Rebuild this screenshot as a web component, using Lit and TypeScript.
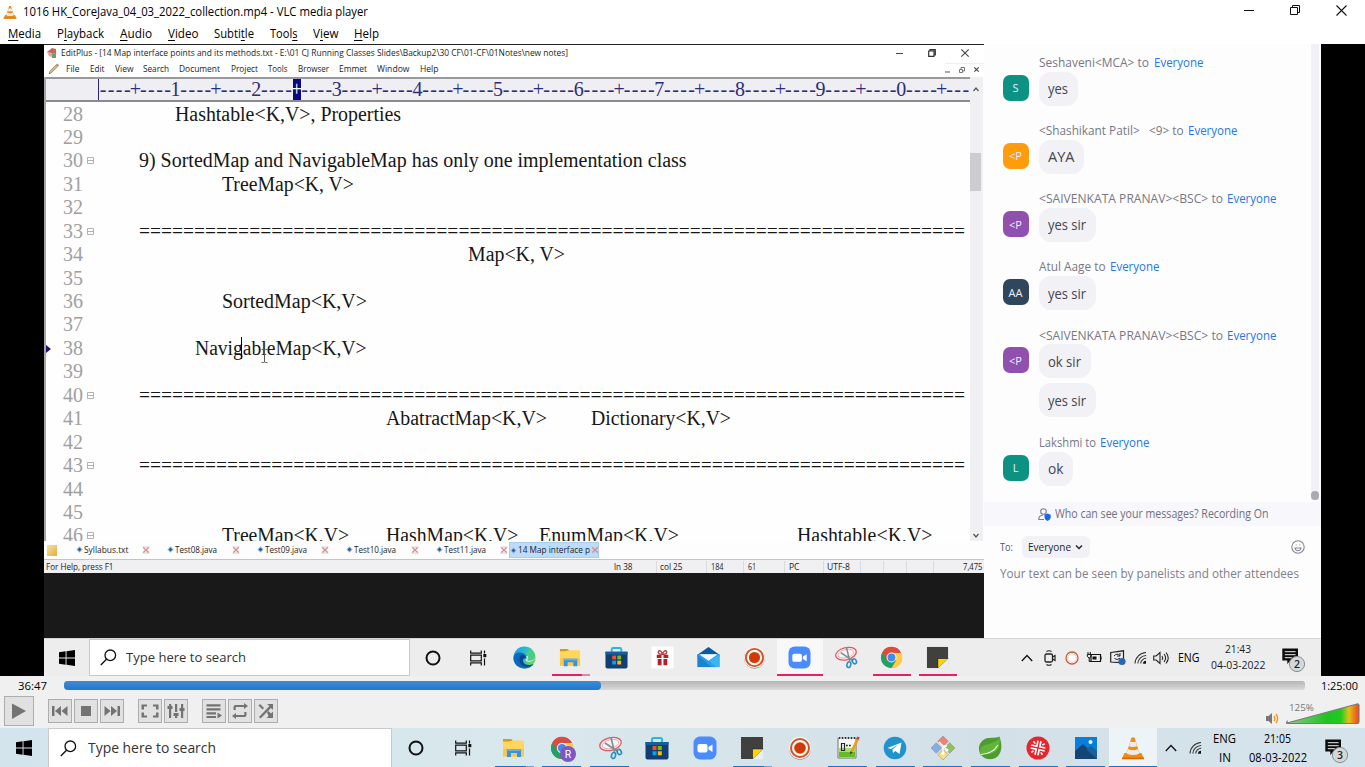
import { LitElement, html, css, svg, nothing } from "lit";
import type { TemplateResult } from "lit";

/** Text that is condensed or expanded to occupy a given width. */
class FitText extends LitElement {
  static properties = { w: { type: Number } };
  static styles = css`
    :host { display: inline-block; flex: none; white-space: pre; }
    .box { display: block; }
    .ink { display: inline-block; transform-origin: 0 50%; white-space: pre; }
  `;
  declare w: number;
  updated() {
    const ink = this.renderRoot.querySelector(".ink") as HTMLElement;
    ink.style.transform = "none";
    const natural = ink.getBoundingClientRect().width;
    if (natural > 0 && this.w) ink.style.transform = `scaleX(${this.w / natural})`;
  }
  render() {
    return html`<span class="box" style="width:${this.w}px"><span class="ink"><slot></slot></span></span>`;
  }
}
customElements.define("fit-text", FitText);

type Piece = [number, number, unknown];

/** A run of texts in one flex row, each with its start and end; null draws a divider. */
const run = (origin: number, pieces: Piece[]) => {
  let at = origin;
  return pieces.map(([a, b, text]) => {
    const gap = a - at;
    at = b;
    if (text === null) return html`<i class="divider" style="margin-left:${gap.toFixed(2)}px"></i>`;
    return html`<fit-text .w=${b - a} style="margin-left:${gap.toFixed(2)}px">${text}</fit-text>`;
  });
};

const icon = (w: number, h: number, body: unknown, vb = `0 0 ${w} ${h}`) =>
  html`<svg width=${w} height=${h} viewBox=${vb} fill="none">${body}</svg>`;

/* ---------- application icons, 24 x 24 ---------- */
const folder = svg`<path d="M1 3h8l2 2h-3L7 7H1z" fill="#d99a0b"/><path d="M1 5.5h8l2-1h11v16H1z" fill="#ffd65c"/><path d="M1 13h21v7.500H1z" fill="#fbc94a"/><path d="M5 21v-7.500h14V21h-4v-4H9v4z" fill="#3b92dc"/><path d="M4.500 13h15v2h-15z" fill="#62b0ec"/>`;
const edge = svg`<defs><linearGradient id="eg" x1="0" y1="0" x2="1" y2=".4"><stop offset="0" stop-color="#1b9de2"/><stop offset=".55" stop-color="#2bbccb"/><stop offset="1" stop-color="#6bd84f"/></linearGradient></defs><circle cx="12" cy="12" r="11.500" fill="url(#eg)"/><path d="M.6 13C.6 8 5 6.500 8.500 7c4 .4 6 3.500 5.500 6-4-.8-5.500 3-3 5.500s7 2.500 10.500.3C18 23.500 12 24.500 7.500 22.500 3 20.500.6 17 .6 13z" fill="#0c68bd"/><path d="M8.200 9.800C5.500 13 6.500 19 11.500 21c4 1.500 8 .3 10-2.200-4 1.800-9.500 1.200-10.900-2.300-.9-2.500.9-4.300 2.700-4-.2-2.200-2.900-3.700-5.100-2.700z" fill="#0b4593"/><path d="M13.800 10.500c1.200 1.600.2 3.200-.5 3.900-.6 1.200 1.700 2.600 4.700 2 2.600-.5 5-2.300 5.300-4.900" fill="#eafafd" opacity=".85"/><path d="M13.400 8.500c2.800 1.200 3.200 4.200 1.200 6 2 1.800 7.300.8 8.500-2.500 0-7-6-9-9.700-3.500z" fill="#4dcb85"/>`;
const store = svg`<path d="M7 6V3.500Q7 2 8.500 2h7Q17 2 17 3.500V6" stroke="#25b5ef" stroke-width="2"/><path d="M.5 6h23v15.500q0 2-2 2h-19q-2 0-2-2z" fill="#123f73"/><path d="M.5 6h23v3H.5z" fill="#175f9c"/><path d="M7.500 10h4v4h-4z" fill="#f25022"/><path d="M12.800 10h4v4h-4z" fill="#7fba00"/><path d="M7.500 15.300h4v4h-4z" fill="#00a4ef"/><path d="M12.800 15.300h4v4h-4z" fill="#ffb900"/>`;
const gift = svg`<path d="M.5.5h23v23H.5z" fill="#fff"/><path d="M6 9h5v3.500H6zM13 9h5v3.500h-5zM7 13.500h4V20H7zM13 13.500h4V20h-4z" fill="#b3202a"/><path d="M12 8.500C8 9 7 7 8 5.500S11.500 6 12 8.500c.5-2.500 3-4.500 4-3s0 3.500-4 3z" stroke="#c23b42" stroke-width="1.500"/>`;
const mail = svg`<path d="M.5 9 12 1l11.500 8v2H.5z" fill="#0c59a4"/><path d="M.5 8.500h23V22H.5z" fill="#2a9fe6"/><path d="M3 9h18l-9 6z" fill="#fff"/><path d="M.5 9 15 22H.5z" fill="#1a83d3"/><path d="M23.500 9 12 15l8 7h3.500z" fill="#37b6f1"/><path d="M3 8.500h18L12 15z" fill="#f3f8fc"/>`;
const recorder = svg`<circle cx="12" cy="12.700" r="11" fill="#9a9390"/><circle cx="12" cy="12" r="11" fill="#fbf7f4"/><circle cx="12" cy="12" r="9" stroke="#cf5323" stroke-width="2"/><circle cx="12" cy="12" r="5.800" fill="#d03a09"/>`;
const zoomApp = svg`<rect x=".5" y=".5" width="23" height="23" rx="6.500" fill="#4a8cff"/><rect x="4.500" y="8" width="10" height="8.500" rx="2" fill="#fff"/><path d="M15.500 11l4-2.500v7.500l-4-2.500z" fill="#fff"/>`;
const snip = svg`<ellipse cx="12.500" cy="8" rx="11" ry="6.300" transform="rotate(-14 12.500 8)" fill="#f4f4f6" stroke="#dd5a60" stroke-width="1.300"/><ellipse cx="12.500" cy="8" rx="8.500" ry="4.300" transform="rotate(-14 12.500 8)" stroke="#e5a3a6" stroke-width=".8"/><path d="M13 1.500 16.500 16M7 7l13 8.500" stroke="#868a8e" stroke-width="1.600"/><ellipse cx="15.500" cy="19.500" rx="2" ry="3" transform="rotate(15 15.500 19.500)" stroke="#2b8ec1" stroke-width="1.600"/><ellipse cx="21.300" cy="16" rx="2" ry="2.700" transform="rotate(-30 21.300 16)" stroke="#2b8ec1" stroke-width="1.600"/>`;
const chrome = svg`<circle cx="12" cy="12" r="11" fill="#dd4b3e"/><path d="M2.500 6.500A11 11 0 0 0 12 23l5-8-5-3-5 2.500z" fill="#1ea362"/><path d="M12 23A11 11 0 0 0 22 7H12l4.800 8z" fill="#ffcd42"/><path d="M2.500 6.500 7.500 14.500 12 7h10A11 11 0 0 0 2.500 6.500z" fill="#dd4b3e"/><circle cx="12" cy="12" r="5.200" fill="#f4f4f4"/><circle cx="12" cy="12" r="4.100" fill="#4688f1"/>`;
const chromeR = svg`${chrome}<circle cx="18" cy="18" r="8" fill="#7e57c2"/><text x="18" y="22" font-size="10.500" fill="#fff" text-anchor="middle" font-family="Roboto, sans-serif">R</text>`;
const sticky = svg`<path d="M1 1h22v22H1z" fill="#40403f"/><path d="M12.500 13H23L12.500 23z" fill="#ffd400"/><path d="M23.200 13v10.200H12.500z" fill="#e9eef0"/><path d="M12 12.500h11.200v.8H12.700V23H12z" fill="#2c2c2c"/>`;
const editplus = svg`<path d="M2 2h18v20H2z" fill="#f5f7f2" stroke="#76756e"/><path d="M3 15h16v6H3z" fill="#64bd27"/><path d="M3 12h16v4H3z" fill="#a9df6c"/><path d="M3.500 1v2M6.500 1v2M9.500 1v2M12.500 1v2M15.500 1v2M18.500 1v2" stroke="#333"/><path d="M5.500 7.500h3v7h-3z" stroke="#262626" stroke-width="1.200"/><path d="M10 9.500h1.800M13 9.500h1.800" stroke="#262626" stroke-width="1.700"/><path d="M21.500 3.500 15.500 16" stroke="#e6a11c" stroke-width="2.800"/><path d="m22.500 1-1.200 2.500" stroke="#c1423a" stroke-width="2.800"/><path d="m14.300 15.300-.3 3.200 2.700-2z" fill="#43382a"/>`;
const telegram = svg`<circle cx="12" cy="12" r="11.300" fill="#1e93cf"/><path d="M4.500 12 18.500 6.500 16.500 18l-4.200-3-2.300 2-.6-3.500 6-5-7.500 4.500z" fill="#fff"/>`;
const gitApp = svg`<g transform="rotate(45 12 12)" stroke="#8c8e8c" stroke-width=".5"><path d="M3.500 3.500H11V11H3.500z" fill="#f0807a"/><path d="M13 3.500h7.500V11H13z" fill="#8fc15b"/><path d="M3.500 13H11v7.500H3.500z" fill="#82aee4"/><path d="M13 13h7.500v7.500H13z" fill="#f5df79"/></g><path d="M8 6l8 8M12 10v8M12 10h4" stroke="#fff" stroke-width="1.400"/><circle cx="16" cy="14" r="1.600" fill="#fff"/><circle cx="12" cy="17.500" r="1.600" fill="#fff"/>`;
const spring = svg`<path d="M21.500.5C24 8 24.500 15 20 20 15 25 7 24 3 19-.5 14 .5 7 6 3.500c5-3 11-.5 15.500-3z" fill="#4e9b2f"/><path d="M21.500 1.500C19 7 11 7 5 10c-3.500 2-3 6-2.500 7.500C8 19.500 19 18 21 10.500c.7-3 1-6 .5-9z" fill="#61b53a"/><path d="M3 18.500C10 17.500 16 16 20 9" stroke="#eaf5e4" stroke-width="1.200"/>`;
const redHash = svg`<circle cx="12" cy="12" r="11.500" fill="#e8242c"/>${[0, 90, 180, 270].map(a => svg`<g transform="rotate(${a + 12} 12 12)" stroke="#fff" stroke-width="1.700"><path d="M10.500 4.800v5.700H4.800M6.300 6.300l2 2"/></g>`)}`;
const photos = svg`<path d="M1 1h22v22H1z" fill="#087fdc"/><path d="m1 15 8-7 14 13v2H1z" fill="#154574"/><path d="m12 13 5-3 6 5v8z" fill="#1d5f9a"/><circle cx="16.500" cy="6" r="2" fill="#f6fbff"/>`;
const cone = svg`<path d="M3.500 17h17l2.500 6H1z" fill="#f48b0c"/><path d="M1 21.500h22V23.300H1z" fill="#d96b00"/><path d="M10.500 1.500h3L19 19q-7 3-14 0z" fill="#f58a0b"/><path d="m9.400 5.500-1.500 4.700q4 1.600 8.200 0L14.600 5.500q-2.500 1-5.200 0zM6.900 13l-1.300 4.500q6.500 3 12.800 0L17.100 13q-5 2.500-10.200 0z" fill="#e9ebec"/>`;

/* ---------- shell glyphs ---------- */
const winLogo = icon(16, 16, svg`<path d="M0 2.200 6.600 1.300V7.600H0zM7.500 1.200 16 0v7.600H7.500zM0 8.400h6.600v6.300L0 13.800zM7.500 8.400H16V16L7.500 14.800z" fill="#000"/>`);
const glass = icon(17, 17, svg`<circle cx="10.300" cy="6.300" r="5.300" stroke="#111" stroke-width="1.300"/><path d="M6.500 10.200.8 16" stroke="#111" stroke-width="1.400"/>`);
const ring = icon(16, 16, svg`<circle cx="8" cy="8" r="6.500" stroke="#111" stroke-width="2"/>`);
const taskView = icon(17, 16, svg`<path d="M.7.500v2.700h10.600V.5M.7 15.500v-2.700h10.600v2.700M.7 5.200h10.600v5.600H.700zM14.500.5v3M14.500 8.500v7" stroke="#111" stroke-width="1.200"/><path d="M13.300 4h3v3.200h-3z" fill="#111"/>`);
const chevronUp = icon(12, 8, svg`<path d="m.8 7 5.200-5.500L11.200 7" stroke="#111" stroke-width="1.300"/>`);
const wifi = icon(13, 13, svg`<path d="M1 12.500A11.500 11.500 0 0 1 12 1.500M3.800 12.500a8.500 8.500 0 0 1 8.400-8M6.700 12.500a5.500 5.500 0 0 1 5.500-5.200" stroke="#333" stroke-width="1.100"/><path d="M9 12.700a3 3 0 0 1 3-3v3z" fill="#111"/>`);
const note = (n: string) => html`<span class="note">
  ${icon(23, 24, svg`<path d="M.3.500h15.700v12H8.500L5.300 16v-3.500H.3z" fill="#0c0c0c"/><path d="M2.800 3.700h10.800M2.800 6.700h10.800M2.800 9.700h7" stroke="#eee" stroke-width="1"/><circle cx="15" cy="16" r="7.600" fill="#d5d8da" stroke="#8b8e90"/><text x="15" y="20" text-anchor="middle" font-size="10.500" font-family="Open Sans, sans-serif" font-weight="600" fill="#222">${n}</text>`)}</span>`;

const vlcButtons: [string, TemplateResult][] = [
  ["", svg`<path d="M4 7h2.500v10H4zM13 7v10L7 12zM19.500 7v10L13.500 12z"/>`],
  ["", svg`<path d="M7 7h10v10H7z"/>`],
  ["", svg`<path d="M17.500 7H20v10h-2.500zM11 7v10l6-5zM4.500 7v10l6-5z"/>`],
  ["gap", svg`<path d="M3.500 5.500h5.500v2H6v3H3.500zM15 5.500h5.500v5H18v-3h-3zM3.500 13.500H6v3h3v2H3.500zM18 13.500h2.500v5H15v-2h3z"/>`],
  ["", svg`<path d="M5 9h2.200v10H5zM3.500 7h5v3h-5zM5 5h2.200v2H5zM11 5h2.200v8H11zM9.500 14h5v3h-5zM11 17h2.200v2H11zM17 5h2.200v4H17zM15.500 9h5v3h-5zM17 12h2.200v7H17z"/>`],
  ["gap", svg`<path d="M4.500 5.200h14v2.200h-14zM4.500 9.200h14v2.200h-14zM4.500 13.200h9.500v2.200H4.500zM4.500 17h9.500v2H4.500zM15.500 13.500l4.500 3-4.500 3z"/>`],
  ["", svg`<path d="M5.500 11V8q0-2 2-2H16V4l4 3-4 3V8H7.700v3zM18.500 13v3q0 2-2 2H8v2l-4-3 4-3v2h8.300v-3z"/>`],
  ["", svg`<path d="M4.500 6.500 6 5l4 4-1.500 1.500zM13 13.500l1.500-1.500 2.500 2.500 2-2V19h-6.500l2-2zM13 5h6v6l-2-2L6.500 19.500 5 18 15.500 7z"/>`],
];

const rule: Piece[] = [[139, 965, "=".repeat(75)]];
const codeRows: [number, boolean, Piece[]][] = [
  [28, false, [[175, 401, "Hashtable<K,V>, Properties"]]],
  [29, false, []],
  [30, true, [[139.4, 687, "9) SortedMap and NavigableMap has only one implementation class"]]],
  [31, false, [[222, 354, "TreeMap<K, V>"]]],
  [32, false, []],
  [33, true, rule],
  [34, false, [[468, 565, "Map<K, V>"]]],
  [35, false, []],
  [36, false, [[221.500, 366.500, "SortedMap<K,V>"]]],
  [37, false, []],
  [38, false, [[195.400, 367, "NavigableMap<K,V>"]]],
  [39, false, []],
  [40, true, rule],
  [41, false, [[386, 547, "AbatractMap<K,V>"], [591, 731, "Dictionary<K,V>"]]],
  [42, false, []],
  [43, true, rule],
  [44, false, []],
  [45, false, []],
  [46, true, [[222, 349, "TreeMap<K,V>"], [386, 518.500, "HashMap<K,V>"], [539, 679, "EnumMap<K,V>"], [797, 932.500, "Hashtable<K,V>"]]],
];

interface Message { from: string; w: number; to: number; initials: string; tone: string; said: [string, number, number][] }
const messages: Message[] = [
  { from: "Seshaveni<MCA> to", w: 110, to: 115, initials: "S", tone: "teal", said: [["yes", 39, 20]] },
  { from: "<Shashikant Patil>   <9> to", w: 144.5, to: 149.5, initials: "<P", tone: "orange", said: [["AYA", 45.500, 26.500]] },
  { from: "<SAIVENKATA PRANAV><BSC> to", w: 184, to: 188.600, initials: "<P", tone: "purple", said: [["yes sir", 57, 38]] },
  { from: "Atul Aage to", w: 66.500, to: 71, initials: "AA", tone: "navy", said: [["yes sir", 57, 38]] },
  { from: "<SAIVENKATA PRANAV><BSC> to", w: 184, to: 188.600, initials: "<P", tone: "purple", said: [["ok sir", 52, 33], ["yes sir", 57, 38]] },
  { from: "Lakshmi to", w: 57, to: 61.500, initials: "L", tone: "teal", said: [["ok", 34.500, 15.500]] },
];

const tabs: [string, number][] = [["Syllabus.txt", 44.500], ["Test08.java", 42], ["Test09.java", 42], ["Test10.java", 42], ["Test11.java", 42]];
const diamond = icon(7, 7, svg`<path d="M3.500.3 6.700 3.500 3.500 6.700.3 3.500z" fill="#9fc0dc"/><path d="M3.500 1.600 5.400 3.500 3.500 5.400 1.600 3.500z" fill="#2b5f93"/>`);
const tabX = icon(8, 8, svg`<path d="M.5 1h7M.5 7h7" stroke="#e2c4c4"/><path d="m1.300 1.500 5.400 5m0-5-5.400 5" stroke="#cf8f93" stroke-width="1.300"/>`);

class AppRoot extends LitElement {
  static styles = css`
    * { box-sizing: border-box; }
    :host { display: flex; flex-direction: column; width: 1365px; height: 767px; overflow: hidden; background: #fff; color: #000; font-family: "Open Sans", "Noto Sans", sans-serif; font-size: 12px; line-height: 1; }
    svg { display: block; flex: none; overflow: visible; }
    fit-text { line-height: 1.3; }
    .row { display: flex; align-items: center; }
    .title { height: 24px; padding-left: 3px; }
    .title .sys { display: flex; align-items: center; margin-left: auto; padding-right: 18px; gap: 36px; height: 20px; align-self: flex-start; }
    .menu { height: 20px; }
    .menu u { text-underline-offset: 2px; }
    .video { display: flex; height: 632px; background: #000; padding: 0 44px; }
    .screen { display: flex; flex-direction: column; width: 1277px; }
    .upper { display: flex; height: 594px; }
    .left { width: 940px; background: #191919; display: flex; flex-direction: column; border-top: 1px solid #222; }
    .ed { height: 528px; background: #fff; display: flex; flex-direction: column; color: #1c1c1c; }
    .edtitle { height: 16px; font-size: 8.800px; padding-left: 2px; }
    .edtitle fit-text, .edmenu fit-text, .tabs fit-text, .status fit-text { padding-top: 2px; }
    .edtitle .sys { display: flex; align-items: center; margin-left: auto; padding-right: 15px; gap: 25px; }
    .edmenu { height: 16px; font-size: 8.800px; padding-left: 4px; }
    .edmenu .sys { display: flex; align-items: center; margin-left: auto; padding-right: 5px; gap: 9px; border-top: 1px solid #eee; height: 12px; }
    .work { display: flex; height: 464px; }
    .pane { width: 926px; border-left: 2px solid #a5a5a8; }
    .ruler { display: flex; height: 25px; border-top: 2px solid #99999c; border-bottom: 2px solid #8b8b8e; background: #efeef2; font: 20px/21px "Liberation Serif", serif; color: #2c2c78; overflow: hidden; }
    .margin { width: 53px; flex: none; border-right: 1px solid #26267a; }
    .cell { width: 8.070px; flex: none; display: flex; justify-content: center; }
    .cell.on { background: #0a0a7c; color: #fff; }
    .code { height: 439px; overflow: hidden; background: #fefefe; padding-top: .3px; }
    .line { display: flex; align-items: center; height: 23.440px; font: 20px/23px "Liberation Serif", serif; color: #161616; position: relative; }
    .line fit-text { line-height: 23px; }
    .num { width: 41px; padding-left: 17px; color: #a0a0a0; flex: none; }
    .fold { width: 8px; flex: none; }
    .mark { position: absolute; left: 0; top: 8px; }
    .caret { position: absolute; left: 195px; top: 0; width: 1px; height: 22px; background: #000; }
    .beam { position: absolute; left: 215px; top: 12px; }
    .scroll { width: 14px; background: #f0eff2; display: flex; flex-direction: column; align-items: center; padding-top: 10px; padding-right: 2px; border-right: 1px solid #fdfdfd; }
    .scroll .thumb { width: 11px; height: 38px; background: #cdcccf; margin-top: 61px; flex: none; }
    .scroll .down { margin-top: auto; padding-bottom: 3px; }
    .tabs { height: 18px; font-size: 8.800px; background: #fdfdfd; }
    .tab { display: flex; align-items: center; gap: 1px; width: 89.600px; flex: none; }
    .tab.first { width: 91.500px; }
    .tab.last { width: 73px; }
    .tab svg:last-child { margin-left: auto; margin-right: 17px; }
    .tab.last svg:last-child { margin-right: 1px; }
    .tab.cur { background: #bcdcfb; border: 1px solid #a6cdf2; width: 90px; height: 16px; gap: 1px; }
    .tab.cur svg:last-child { margin: 0; }
    .sheet { width: 10px; height: 11px; background: linear-gradient(135deg, #f8e29b, #dfae3c); margin: 0 18.500px 0 3px; flex: none; }
    .status { height: 14px; background: #f0eff1; border-top: 1px solid #c4c4c6; font-size: 8.800px; }
    .divider { width: 1px; height: 12px; background: #dbdade; flex: none; }
    .chat { width: 337px; background: #fdfdfe; display: flex; flex-direction: column; }
    .feed { display: flex; height: 458px; padding-top: 9.700px; }
    .list { flex: 1; display: flex; flex-direction: column; gap: 16.200px; }
    .track { width: 8px; margin: -9.700px 2px 0 0; background: #f0f0f6; display: flex; flex-direction: column; justify-content: flex-end; height: 456px; }
    .track i { width: 8px; height: 9px; border-radius: 4px; background: #aaaab0; }
    .msg { display: grid; grid-template-columns: 27px 1fr; column-gap: 9px; padding-left: 18.500px; }
    .who { grid-column: 2; display: flex; align-items: center; height: 18px; font-size: 12px; color: #777785; }
    .who .to { color: #2577e4; }
    .face { width: 26px; height: 26px; margin-top: 3px; border-radius: 7px; display: flex; justify-content: center; align-items: center; font-size: 11px; color: #eef; }
    .teal { background: #0c9283; } .orange { background: #ff9c0c; } .purple { background: #914fae; } .navy { background: #2f465c; }
    .bubbles { display: flex; flex-direction: column; gap: 5px; }
    .bubble { height: 34px; border-radius: 12px; background: #f1f1f6; display: flex; align-items: center; justify-content: center; color: #45454f; font-size: 13.800px; padding-top: .5px; }
    .info { height: 24px; background: #f7f7fc; font-size: 12px; color: #6f6f7d; padding-left: 54px; gap: 4px; flex: none; }
    .tobar { height: 22px; margin-top: 10px; padding: 0 16.500px 0 16px; font-size: 11px; color: #555561; }
    .pill { display: flex; align-items: center; height: 22px; width: 68px; gap: 4px; margin-left: 9px; padding-left: 6px; border-radius: 6px; background: #f1f1f6; color: #24242d; }
    .smile { margin-left: auto; }
    .hint { margin: 7.500px 0 0 15.500px; font-size: 12.500px; color: #7d7d8b; }
    .bar { display: flex; flex: none; }
    .bar.inner { height: 38px; background: #ededee; border-top: 1px solid #d4d4d4; }
    .bar.outer { height: 39px; background: linear-gradient(90deg, #d3e4ec, #d8e8ec 40%, #d4e0e8 72%, #d5e4ec); }
    .start { display: flex; align-items: center; justify-content: center; flex: none; }
    .inner .start { width: 45px; } .outer .start { width: 48px; }
    .search { display: flex; align-items: center; background: #fff; border: 1px solid #c9c9c9; flex: none; color: #333; }
    .inner .search { width: 321px; padding-left: 10px; font-size: 13.500px; gap: 9px; height: 37px; }
    .outer .search { width: 344px; padding-left: 11px; font-size: 14.500px; gap: 11px; border-bottom: 0; padding-top: 1px; }
    .slot { display: flex; align-items: center; justify-content: center; flex: none; }
    .inner .slot { width: 46px; } .outer .slot { width: 48px; }
    .inner .slot.tv { width: 46px; padding-right: 2px; }
    .outer .slot.tv { width: 50.500px; padding-right: 3px; }
    .apps { display: flex; flex: none; }
    .inner .apps { width: 458.500px; } .outer .apps { width: 666.500px; }
    .app { flex: 1; display: flex; flex-direction: column; align-items: center; }
    .inner .app { padding-top: 7px; } .outer .app { padding-top: 8px; }
    .inner .app svg { width: 23px; height: 23px; }
    .app.hot { background: #f8f8f9; } .outer .app.hot { background: #edf4f8; }
    .line2 { margin-top: auto; width: 38px; height: 2px; background: #e3225f; }
    .outer .line2 { background: #1673c8; height: 1.500px; width: 39px; }
    .hot .line2, .outer .hot .line2 { width: 100%; }
    .duo { border-right: 8px solid #f17fa4; } .outer .duo { border-right-color: #6ea5d4; }
    .tray { display: flex; align-items: center; flex: 1; }
    .stack { display: flex; flex-direction: column; align-items: center; justify-content: center; gap: 1px; flex: none; font-size: 11.500px; color: #1c1c1c; }
    .inner .stack { padding-bottom: 1px; }
    .outer .stack { gap: 3px; font-size: 12px; color: #000; padding-top: 1px; }
    .ctl { height: 52px; background: #f0f0f0; display: flex; flex-direction: column; flex: none; }
    .seek { height: 20px; padding-left: 18px; font-size: 11.500px; }
    .rail { width: 1241px; height: 9px; border-radius: 3px; background: linear-gradient(#b5b5b5, #dadada); margin: 0 16px 2px 17px; }
    .done { width: 537px; height: 9px; border-radius: 4px; background: linear-gradient(#3c8bd8, #2179cd); }
    .ops { height: 30px; padding-left: 4px; }
    .btn { width: 24px; height: 24px; border: 1px solid #adadad; background: #e1e1e1; display: flex; align-items: center; justify-content: center; margin-right: 2px; }
    .btn svg { fill: #737373; }
    .btn.play { width: 30px; height: 30px; margin-right: 14px; }
    .btn.gap { margin-left: 12px; }
    .vol { margin-left: auto; display: flex; align-items: flex-end; height: 30px; padding: 0 5px 1px 0; gap: 5px; }
    .wedge { position: relative; width: 75px; height: 24px; }
    .pct { position: absolute; left: 4px; top: 1px; font-size: 9.800px; color: #777; }
    .note { display: block; padding-top: 4px; }
    .outer .note { padding-top: 6px; }
  `;

  chrome(kind: "big" | "small" | "mini") {
    if (kind === "big")
      return html`${icon(10, 10, svg`<path d="M0 5.500h10" stroke="#111"/>`)}${icon(10, 10, svg`<path d="M.5 2.500h7v7h-7zM2.500 2.500v-2h7v7h-2" stroke="#111"/>`)}${icon(11, 11, svg`<path d="m.5.5 10 10m0-10-10 10" stroke="#111" stroke-width="1.100"/>`)}`;
    if (kind === "small")
      return html`${icon(7, 8, svg`<path d="M0 4.500h7" stroke="#444"/>`)}${icon(8, 8, svg`<path d="M.7 2h5.300v5.300H.7zM2 2V.7h5.300V6H6" stroke="#333" stroke-width="1.200"/>`)}${icon(8, 8, svg`<path d="m.3.3 7.400 7.400m0-7.400L.3 7.700" stroke="#444" stroke-width="1.100"/>`)}`;
    return html`${icon(5, 6, svg`<path d="M0 5h5" stroke="#555"/>`)}${icon(6, 6, svg`<path d="M.5 2.500h3v3h-3zM2 2V.5h3.500V4H4" stroke="#666" stroke-width=".9"/>`)}${icon(5, 5, svg`<path d="m.3.3 4.400 4.400m0-4.400L.3 4.700" stroke="#444" stroke-width="1.100"/>`)}`;
  }

  editor() {
    const cells = Array.from({ length: 108 }, (_, i) => {
      const n = i + 1;
      const ch = n % 10 === 0 ? String((n / 10) % 10) : n % 5 === 0 ? "+" : "-";
      return html`<span class="cell ${n === 25 ? "on" : ""}">${ch}</span>`;
    });
    return html`<div class="ed">
      <div class="row edtitle">
        ${icon(12, 12, svg`<path d="M1 5 6 1l4 1v5L5 6z" fill="#c9655d"/><path d="m1 5 5 1v4L3 9z" fill="#e5a49b"/><path d="m6 6 4 1v4H6z" fill="#6f9f68"/>`)}
        ${run(58, [[61, 568, "EditPlus - [14 Map interface points and its methods.txt - E:\\01 CJ Running Classes Slides\\Backup2\\30 CF\\01-CF\\01Notes\\new notes]"]])}
        <span class="sys">${this.chrome("small")}</span>
      </div>
      <div class="row edmenu">
        ${icon(12, 12, svg`<path d="m2 9.500 6.500-6.500" stroke="#c9c08a" stroke-width="2.500"/><path d="M1.500 8.500 8 2M2.800 10.200 9.500 3.800" stroke="#7d7760" stroke-width=".6"/><path d="m.8 11 2-.5-1.300-1.500z" fill="#444"/><path d="m8.500 3 1.700-1.700" stroke="#c8836b" stroke-width="2.500"/>`)}
        ${run(60, [[66, 79.500, "File"], [89.500, 104, "Edit"], [114.500, 133, "View"], [143, 169, "Search"], [179, 220, "Document"], [230.500, 257.500, "Project"], [268, 287.500, "Tools"], [298, 329, "Browser"], [339, 367, "Emmet"], [377, 409.500, "Window"], [420, 438.500, "Help"]])}
        <span class="sys">${this.chrome("mini")}</span>
      </div>
      <div class="work">
        <div class="pane">
          <div class="ruler"><span class="margin"></span>${cells}</div>
          <div class="code">${codeRows.map(([n, fold, parts]) => html`<div class="line">
            <span class="num"><fit-text .w=${20}>${n}</fit-text></span>
            <span class="fold">${fold ? icon(7, 7, svg`<path d="M.5.5h6v6h-6zM.5 3.500h6" stroke="#aaa" stroke-width=".9"/>`) : nothing}</span>
            ${run(95, parts)}
            ${n === 38 ? html`<span class="mark">${icon(5, 8, svg`<path d="m0 0 5 4-5 4z" fill="#18186e"/>`)}</span><span class="caret"></span><span class="beam">${icon(7, 14, svg`<path d="M.5.5h2q1 0 1 1v11q0 1-1 1h-2M6.500.5h-2q-1 0-1 1v11q0 1 1 1h2" stroke="#555" stroke-width=".9"/>`)}</span>` : nothing}
          </div>`)}</div>
        </div>
        <div class="scroll">
          ${icon(6, 5, svg`<path d="m.5 4 2.500-3 2.500 3" stroke="#555" stroke-width="1.200"/>`)}
          <span class="thumb"></span>
          <span class="down">${icon(6, 5, svg`<path d="m.5 1 2.500 3 2.500-3" stroke="#555" stroke-width="1.200"/>`)}</span>
        </div>
      </div>
      <div class="row tabs">
        <span class="sheet"></span>
        ${tabs.map(([t, w], i) => html`<span class="tab ${i === 0 ? "first" : i === 4 ? "last" : ""}">${diamond}<fit-text .w=${w}>${t}</fit-text>${tabX}</span>`)}
        <span class="tab cur">${diamond}<fit-text .w=${72}>14 Map interface p</fit-text>${tabX}</span>
      </div>
      <div class="row status">${run(44, [[45.500, 113, "For Help, press F1"], [613.500, 632, "ln 38"], [656, 657, null], [660, 682.500, "col 25"], [706, 707, null], [711, 723.500, "184"], [743, 744, null], [747.500, 755.500, "61"], [784, 785, null], [788.500, 799, "PC"], [823, 824, null], [826.500, 849.500, "UTF-8"], [860, 861, null], [883, 884, null], [906, 907, null], [933, 934, null], [962.500, 982, "7,475"]])}</div>
    </div>`;
  }

  chat() {
    return html`<div class="chat">
      <div class="feed">
        <div class="list">${messages.map(m => html`<div class="msg">
          <div class="who">${run(0, [[0, m.w, m.from]])}<span class="to">${run(m.w, [[m.to, m.to + 49.500, "Everyone"]])}</span></div>
          <span class="face ${m.tone}">${m.initials}</span>
          <div class="bubbles">${m.said.map(([t, w, tw]) => html`<span class="bubble" style="width:${w}px"><fit-text .w=${tw}>${t}</fit-text></span>`)}</div>
        </div>`)}</div>
        <div class="track"><i></i></div>
      </div>
      <div class="row info">
        ${icon(13, 13, svg`<circle cx="5.500" cy="3.500" r="2.800" stroke="#7c7c8c" stroke-width="1.100"/><path d="M6 11.500H.8q0-4 4-4.200" stroke="#7c7c8c" stroke-width="1.100"/><path d="m9.500 5.500 3.200 1.300v3Q12 12 9.500 13 7 12 6.500 9.800v-3z" fill="#1769e8"/>`)}
        <fit-text .w=${213.500}>Who can see your messages? Recording On</fit-text>
      </div>
      <div class="row tobar">
        <fit-text .w=${13}>To:</fit-text>
        <span class="pill"><fit-text .w=${43}>Everyone</fit-text>${icon(8, 6, svg`<path d="m1 1.500 3 3 3-3" stroke="#24242d" stroke-width="1.500"/>`)}</span>
        <span class="smile">${icon(14, 14, svg`<circle cx="7" cy="7" r="6.200" stroke="#858593" stroke-width="1.100"/><path d="M4 8q.5 2.700 3 2.700T10 8zM4.700 5h.9M8.400 5h.9" stroke="#858593" stroke-width="1.100"/>`)}</span>
      </div>
      <div class="hint"><fit-text .w=${299}>Your text can be seen by panelists and other attendees</fit-text></div>
    </div>`;
  }

  apps(list: [unknown, string][]) {
    return html`<div class="apps">${list.map(([g, s]) => html`<span class="app ${s.includes("h") ? "hot" : ""}">${icon(24, 24, g)}${s.includes("u") ? html`<span class="line2 ${s.includes("d") ? "duo" : ""}"></span>` : nothing}</span>`)}</div>`;
  }

  render() {
    return html`
      <div class="row title">
        ${icon(14, 16, cone, "0 0 24 24")}
        ${run(17, [[23, 368, "1016 HK_CoreJava_04_03_2022_collection.mp4 - VLC media player"]])}
        <span class="sys">${this.chrome("big")}</span>
      </div>
      <div class="row menu">${run(0, [[8, 41, html`<u>M</u>edia`], [57, 104, html`P<u>l</u>ayback`], [120, 152, html`<u>A</u>udio`], [167.500, 198, html`<u>V</u>ideo`], [214, 254, html`Subti<u>t</u>le`], [270, 297.500, html`Tool<u>s</u>`], [313, 338.500, html`V<u>i</u>ew`], [354, 379, html`<u>H</u>elp`]])}</div>
      <div class="video"><div class="screen">
        <div class="upper"><div class="left">${this.editor()}</div>${this.chat()}</div>
        <div class="bar inner">
          <span class="start">${winLogo}</span>
          <span class="search">${glass}<fit-text .w=${120}>Type here to search</fit-text></span>
          <span class="slot">${ring}</span><span class="slot tv">${taskView}</span>
          ${this.apps([[edge, ""], [folder, "ud"], [store, ""], [gift, ""], [mail, ""], [recorder, ""], [zoomApp, "hu"], [snip, ""], [chrome, "u"], [sticky, "u"]])}
          <div class="tray" style="padding-left:60px">
            ${chevronUp}
            <span style="margin-left:11px">${icon(12, 16, svg`<rect x="1" y="4" width="7.500" height="8" rx="1.500" stroke="#222" stroke-width="1.300"/><path d="m8.500 7 2.500-1.500v5L8.500 9M2.500 1.500q2.500-1.500 5 0M2.500 14.500q2.500 1.500 5 0" stroke="#222" stroke-width="1.200"/>`)}</span>
            <span style="margin-left:9px">${icon(14, 14, svg`<circle cx="7" cy="7" r="6" fill="#fff" stroke="#cc5b38" stroke-width="1.300"/><circle cx="7" cy="7" r="4.300" stroke="#eec1b2" stroke-width=".8"/>`)}</span>
            <span style="margin-left:8px">${icon(15, 12, svg`<path d="M4 2.500h9.500v7H4zM14 4.500v3" stroke="#111" stroke-width="1.200"/><path d="M5.500 4.500h4v3h-4z" fill="#111"/><path d="M.3 2.500h3.700v2L2.200 6 .3 4.500zM1 0v2M3.300 0v2M2.200 6v3.500H4" stroke="#111"/>`)}</span>
            <span style="margin-left:8px">${icon(16, 15, svg`<path d="M.7 2.500 13.500.8v12L.7 12z" stroke="#222" stroke-width="1.200"/><path d="M4 6q3-3.500 6-.5M10 3v3H7M10 8q-3 3-5.500.5" stroke="#222"/><circle cx="12" cy="11.500" r="3.600" fill="#2469b8"/>`)}</span>
            <span style="margin-left:8.5px">${wifi}</span>
            <span style="margin-left:6px">${icon(16, 14, svg`<path d="M.7 5h2.500L7 1.500v11L3.200 9H.7zM9 5q1.500 2 0 4M11 3q3.200 4 0 8M13 1.500q4.500 5.500 0 11" stroke="#222" stroke-width="1.100"/>`)}</span>
            <span style="margin-left:8.5px"><fit-text .w=${21.500}>ENG</fit-text></span>
            <span class="stack" style="margin-left:12px"><fit-text .w=${26}>21:43</fit-text><fit-text .w=${54.500}>04-03-2022</fit-text></span>
            <span style="margin-left:16px">${note("2")}</span>
          </div>
        </div>
      </div></div>
      <div class="ctl">
        <div class="row seek"><fit-text .w=${29}>36:47</fit-text><div class="rail"><div class="done"></div></div><fit-text .w=${37}>1:25:00</fit-text></div>
        <div class="row ops">
          <span class="btn play">${icon(30, 30, svg`<path d="M8 7.500 22 15 8 23z"/>`)}</span>
          ${vlcButtons.map(([c, g]) => html`<span class="btn ${c}"><svg width="24" height="24" viewBox="0 0 24 24">${g}</svg></span>`)}
          <span class="vol">${icon(15, 13, svg`<path d="M1 4h2.500L7 1v11L3.500 9H1z" fill="#777"/><path d="M9 4q1.700 2.500 0 5M11 2q3.300 4.500 0 9" stroke="#f19a25" stroke-width="1.500"/>`)}
            <span class="wedge">${icon(75, 24, svg`<defs><linearGradient id="vg"><stop offset="0" stop-color="#8fc98d"/><stop offset=".55" stop-color="#22c225"/><stop offset=".75" stop-color="#20cb20"/><stop offset=".86" stop-color="#e3c01b"/><stop offset="1" stop-color="#f1431b"/></linearGradient></defs><path d="M2 22 72 3q2-.5 2 1.500V20.500q0 2-2 2H2q-1-.5 0-2z" fill="url(#vg)" stroke="#7b7b7b" stroke-width="1.100"/>`)}
            <span class="pct"><fit-text .w=${25}>125%</fit-text></span></span></span>
        </div>
      </div>
      <div class="bar outer">
        <span class="start">${winLogo}</span>
        <span class="search">${glass}<fit-text .w=${128}>Type here to search</fit-text></span>
        <span class="slot">${ring}</span><span class="slot tv">${taskView}</span>
        ${this.apps([[folder, "ud"], [chromeR, "u"], [snip, "u"], [store, ""], [zoomApp, ""], [sticky, "ud"], [recorder, ""], [editplus, "u"], [telegram, "u"], [gitApp, "u"], [spring, "u"], [redHash, "u"], [photos, "u"], [cone, "hu"]])}
        <div class="tray" style="padding-left:8px">
          ${chevronUp}<span style="margin-left:12px">${wifi}</span>
          <span class="stack" style="margin-left:11px"><fit-text .w=${23}>ENG</fit-text><fit-text .w=${12}>IN</fit-text></span>
          <span class="stack" style="margin-left:12.500px"><fit-text .w=${27}>21:05</fit-text><fit-text .w=${58}>08-03-2022</fit-text></span>
          <span style="margin-left:18px">${note("3")}</span>
        </div>
      </div>`;
  }
}
customElements.define("app-root", AppRoot);
